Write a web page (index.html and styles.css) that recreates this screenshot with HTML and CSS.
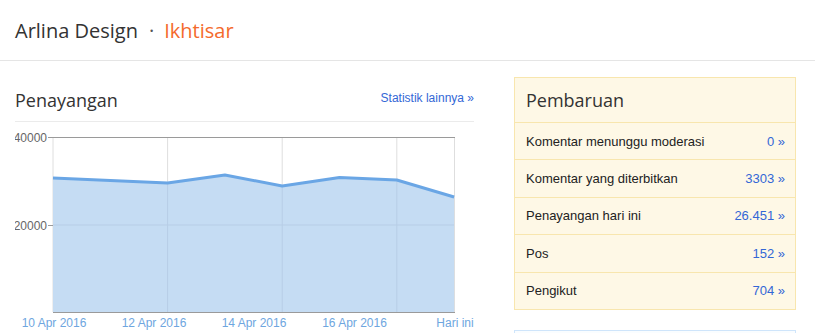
FILE: index.html
```html
<!DOCTYPE html>
<html lang="id">
<head>
    <meta charset="UTF-8">
    <meta name="viewport" content="width=device-width, initial-scale=1.0">
    <title>Arlina Design · Ikhtisar</title>
    <link rel="stylesheet" href="styles.css">
</head>
<body>
    <div class="topbar">
        <span class="blog-name">Arlina Design</span>
        <span class="sep">·</span>
        <span class="page-name">Ikhtisar</span>
    </div>

    <div class="main">
        <div class="stats">
            <div class="stats-head">
                <h2>Penayangan</h2>
                <a href="#" class="more-link">Statistik lainnya »</a>
            </div>
            <svg class="chart" width="459" height="211" viewBox="0 0 459 211">
                <!-- grid -->
                <line x1="152.6" y1="15" x2="152.6" y2="190" stroke="#dedede" />
                <line x1="267.2" y1="15" x2="267.2" y2="190" stroke="#dedede" />
                <line x1="381.8" y1="15" x2="381.8" y2="190" stroke="#dedede" />
                <line x1="439.5" y1="15" x2="439.5" y2="190" stroke="#dedede" />
                <line x1="38" y1="15" x2="38" y2="190" stroke="#dedede" />
                <line x1="38" y1="103" x2="440" y2="103" stroke="#dedede" />
                <!-- area -->
                <polygon points="38,56 95.3,58.5 152.6,61 209.9,53 267.2,64 324.5,55.5 381.8,58 439.1,75 439.1,190 38,190" fill="#c5dcf3" />
                <line x1="152.6" y1="61" x2="152.6" y2="190" stroke="#b7cde6" />
                <line x1="267.2" y1="64" x2="267.2" y2="190" stroke="#b7cde6" />
                <line x1="381.8" y1="58" x2="381.8" y2="190" stroke="#b7cde6" />
                <line x1="38" y1="103" x2="439" y2="103" stroke="#b7cde6" />
                <polyline points="38,56 95.3,58.5 152.6,61 209.9,53 267.2,64 324.5,55.5 381.8,58 439.1,75" fill="none" stroke="#6aa6e5" stroke-width="3" stroke-linejoin="round" />
                <!-- axes -->
                <line x1="33" y1="15.5" x2="440" y2="15.5" stroke="#9a9a9a" />
                <line x1="33" y1="103.5" x2="38" y2="103.5" stroke="#9a9a9a" />
                <line x1="38" y1="190.5" x2="440" y2="190.5" stroke="#9a9a9a" />
                <text class="y-label" x="32" y="19.5">40000</text>
                <text class="y-label" x="32" y="107.5">20000</text>
                <text class="x-label" x="39" y="205">10 Apr 2016</text>
                <text class="x-label" x="139" y="205">12 Apr 2016</text>
                <text class="x-label" x="239" y="205">14 Apr 2016</text>
                <text class="x-label" x="339.5" y="205">16 Apr 2016</text>
                <text class="x-label" x="440" y="205">Hari ini</text>
            </svg>
        </div>

        <div class="side">
            <div class="updates">
                <div class="updates-title">Pembaruan</div>
                <div class="update-row">
                    <span>Komentar menunggu moderasi</span>
                    <a href="#">0 »</a>
                </div>
                <div class="update-row">
                    <span>Komentar yang diterbitkan</span>
                    <a href="#">3303 »</a>
                </div>
                <div class="update-row">
                    <span>Penayangan hari ini</span>
                    <a href="#">26.451 »</a>
                </div>
                <div class="update-row">
                    <span>Pos</span>
                    <a href="#">152 »</a>
                </div>
                <div class="update-row">
                    <span>Pengikut</span>
                    <a href="#">704 »</a>
                </div>
            </div>
            <div class="news"></div>
        </div>
    </div>
</body>
</html>
```

FILE: styles.css
```css
body {
    margin: 0;
    font-family: "Liberation Sans", Arial, sans-serif;
    background: #fff;
    color: #222;
}
a {
    color: #3367d6;
    text-decoration: none;
}
.topbar {
    height: 60px;
    border-bottom: 1px solid #e5e5e5;
    padding-left: 15px;
    display: flex;
    align-items: center;
    font-family: "Open Sans", sans-serif;
    font-size: 20px;
    color: #333;
}
.sep {
    color: #555;
    margin: 0 10px 0 11px;
}
.page-name {
    color: #f46a2c;
}
.main {
    display: flex;
    padding-left: 15px;
}
.stats {
    width: 459px;
}
.stats-head {
    display: flex;
    justify-content: space-between;
    align-items: center;
    padding: 27px 0 9px;
    border-bottom: 1px solid #ebebeb;
}
.stats-head h2 {
    margin: 0;
    font-family: "Open Sans", sans-serif;
    font-weight: normal;
    font-size: 18px;
    line-height: 24px;
    color: #333;
}
.more-link {
    font-size: 12px;
    margin-top: -5px;
}
.chart {
    display: block;
}
.y-label {
    font-family: "Liberation Sans", Arial, sans-serif;
    font-size: 12px;
    fill: #666;
    text-anchor: end;
}
.x-label {
    font-family: "Liberation Sans", Arial, sans-serif;
    font-size: 12px;
    fill: #6ea6e0;
    text-anchor: middle;
}
.side {
    width: 282px;
    margin-left: 40px;
    padding-top: 16px;
}
.updates {
    background: #fef8e6;
    border: 1px solid #f8e6ae;
}
.updates-title {
    height: 44px;
    line-height: 44px;
    padding: 0 11px;
    font-family: "Open Sans", sans-serif;
    font-size: 18px;
    color: #333;
    border-bottom: 1px solid #f8e6ae;
}
.update-row {
    display: flex;
    justify-content: space-between;
    align-items: center;
    height: 36.4px;
    padding: 0 10px 0 11px;
    font-size: 13px;
    border-bottom: 1px solid #f8e6ae;
}
.update-row:last-child {
    border-bottom: none;
}
.news {
    margin-top: 20px;
    height: 2px;
    border: 1px solid #cfe5fb;
    border-bottom: none;
    background: #fafdff;
}
```
